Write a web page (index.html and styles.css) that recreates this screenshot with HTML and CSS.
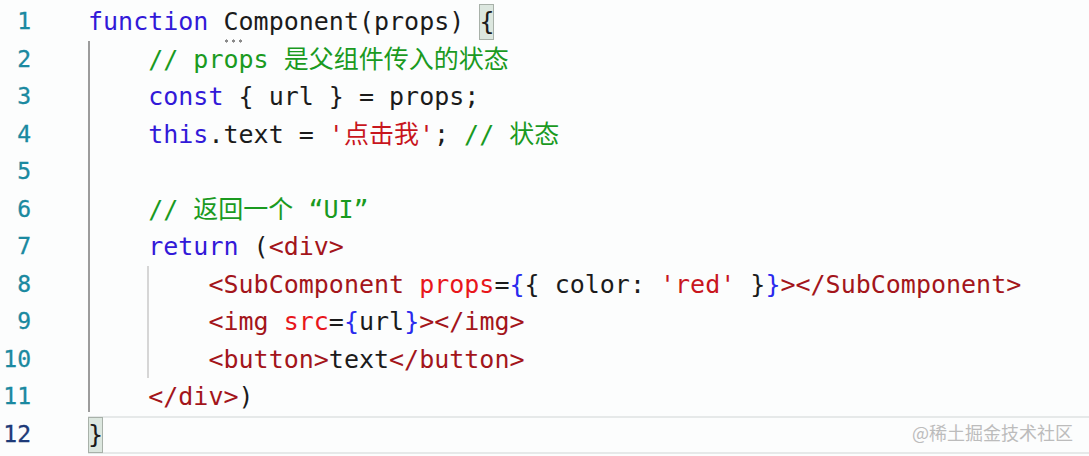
FILE: index.html
```html
<!DOCTYPE html>
<html lang="zh-CN">
<head>
<meta charset="utf-8">
<title>Component</title>
<link rel="stylesheet" href="styles.css">
</head>
<body>
<div class="editor">
  <div class="gutter">
    <div class="num">1</div>
    <div class="num">2</div>
    <div class="num">3</div>
    <div class="num">4</div>
    <div class="num">5</div>
    <div class="num">6</div>
    <div class="num">7</div>
    <div class="num">8</div>
    <div class="num">9</div>
    <div class="num">10</div>
    <div class="num">11</div>
    <div class="num num-current">12</div>
  </div>
  <div class="code">
    <div class="line"><span class="kw">function</span> <span class="hint">C</span>omponent(props) <span class="match">{</span></div>
    <div class="block block-outer">
      <div class="line">    <span class="cm">// props 是父组件传入的状态</span></div>
      <div class="line">    <span class="kw">const</span> { url } = props;</div>
      <div class="line">    <span class="kw">this</span>.text = <span class="str">'点击我'</span>; <span class="cm">// 状态</span></div>
      <div class="line"> </div>
      <div class="line">    <span class="cm">// 返回一个 “UI”</span></div>
      <div class="line">    <span class="kw">return</span> (<span class="tag">&lt;div&gt;</span></div>
      <div class="block block-inner">
        <div class="line">        <span class="tag">&lt;SubComponent</span> <span class="attr">props</span>=<span class="br">{</span>{ color: <span class="str">'red'</span> }<span class="br">}</span><span class="tag">&gt;&lt;/SubComponent&gt;</span></div>
        <div class="line">        <span class="tag">&lt;img</span> <span class="attr">src</span>=<span class="br">{</span>url<span class="br">}</span><span class="tag">&gt;&lt;/img&gt;</span></div>
        <div class="line">        <span class="tag">&lt;button&gt;</span>text<span class="tag">&lt;/button&gt;</span></div>
      </div>
      <div class="line">    <span class="tag">&lt;/div&gt;</span>)</div>
    </div>
    <div class="line line-current"><span class="match">}</span></div>
  </div>
  <div class="watermark">@稀土掘金技术社区</div>
</div>
</body>
</html>
```

FILE: styles.css
```css
html, body {
  margin: 0;
  padding: 0;
  background: #fcfdfd;
}

.editor {
  position: relative;
  display: flex;
  width: 1089px;
  height: 456px;
  padding-top: 3px;
  box-sizing: border-box;
  overflow: hidden;
  background: #fcfdfd;
  font-family: "DejaVu Sans Mono", "Noto Sans CJK SC", monospace;
  font-size: 25px;
  line-height: 37.55px;
  color: #1b1b1b;
}

.gutter {
  width: 88px;
  flex: none;
  padding-right: 57px;
  box-sizing: border-box;
  text-align: right;
}

.num {
  height: 37.55px;
  font-size: 23px;
  color: #1a89a0;
  -webkit-text-stroke: 0.3px currentColor;
}

.num-current {
  color: #1e3a78;
}

.code {
  flex: 1;
  min-width: 0;
}

.line {
  height: 37.55px;
  white-space: pre;
}

.block-outer {
  background: linear-gradient(#9c9c9c, #9c9c9c) no-repeat 0 0 / 2px calc(100% - 4px);
}

.block-inner {
  background: linear-gradient(#d6d6d6, #d6d6d6) no-repeat 59px 0 / 2px 100%;
}

.line-current {
  box-shadow: inset 0 2px #e6e9e9, inset 0 -2px #e6e9e9;
  background: #fcfdfd;
}

.match {
  display: inline-block;
  height: 36px;
  line-height: 36px;
  vertical-align: top;
  margin-top: 1px;
  background: #dce7df;
  box-shadow: inset 0 0 0 1px #a8b1a9;
}

.hint {
  position: relative;
}

.hint::after {
  content: "";
  position: absolute;
  left: 0;
  bottom: -7px;
  width: 21px;
  height: 4px;
  background: radial-gradient(circle, #8a8a8a 1.4px, transparent 1.8px) 0 0 / 7px 4px repeat-x;
}

.kw { color: #3219d8; }
.cm { color: #1a9a1f; }
.str { color: #c8161d; }
.tag { color: #a3151b; }
.attr { color: #e8161b; }
.br { color: #2a2aee; }

.watermark {
  position: absolute;
  right: 16px;
  bottom: 12px;
  font-family: "Noto Sans CJK SC", sans-serif;
  font-size: 18px;
  line-height: 24px;
  color: #bcbcbc;
}
```
